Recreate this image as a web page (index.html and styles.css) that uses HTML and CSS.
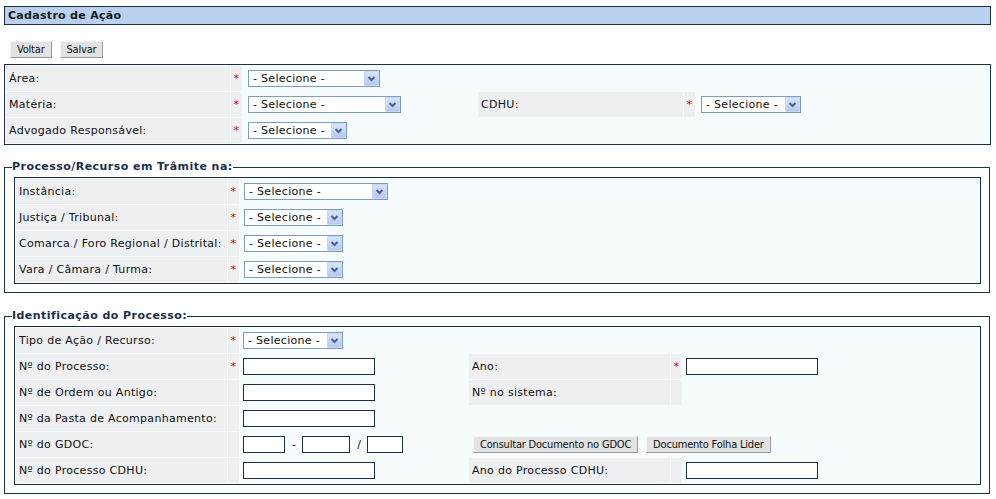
FILE: index.html
```html
<!DOCTYPE html>
<html>
<head lang="pt-BR">
    <meta charset="UTF-8">
    <title>Cadastro de Ação</title>
    <link rel="stylesheet" href="styles.css">
</head>
<body>
<div id="title-bar">Cadastro de Ação</div>

<div id="actions">
    <button class="btn" type="button">Voltar</button>
    <button class="btn" type="button">Salvar</button>
</div>

<table class="form-table main-table">
    <colgroup>
        <col class="c-lbl">
        <col class="c-req">
        <col class="c-fld">
        <col class="c-lbl2">
        <col class="c-req">
        <col>
    </colgroup>
    <tr>
        <td class="lbl">Área:</td>
        <td class="lbl req">*</td>
        <td class="fld">
            <span class="combo w-132"><select><option>- Selecione -</option></select><span class="arrow"><svg width="13" height="13" viewBox="0 0 13 13"><polyline points="3.5,5 6.5,8 9.5,5" fill="none" stroke="#4d6185" stroke-width="2"/></svg></span></span>
        </td>
        <td></td>
        <td></td>
        <td></td>
    </tr>
    <tr>
        <td class="lbl">Matéria:</td>
        <td class="lbl req">*</td>
        <td class="fld">
            <span class="combo w-153"><select><option>- Selecione -</option></select><span class="arrow"><svg width="13" height="13" viewBox="0 0 13 13"><polyline points="3.5,5 6.5,8 9.5,5" fill="none" stroke="#4d6185" stroke-width="2"/></svg></span></span>
        </td>
        <td class="lbl">CDHU:</td>
        <td class="lbl req">*</td>
        <td class="fld">
            <span class="combo w-100"><select><option>- Selecione -</option></select><span class="arrow"><svg width="13" height="13" viewBox="0 0 13 13"><polyline points="3.5,5 6.5,8 9.5,5" fill="none" stroke="#4d6185" stroke-width="2"/></svg></span></span>
        </td>
    </tr>
    <tr>
        <td class="lbl">Advogado Responsável:</td>
        <td class="lbl req">*</td>
        <td class="fld">
            <span class="combo w-99"><select><option>- Selecione -</option></select><span class="arrow"><svg width="13" height="13" viewBox="0 0 13 13"><polyline points="3.5,5 6.5,8 9.5,5" fill="none" stroke="#4d6185" stroke-width="2"/></svg></span></span>
        </td>
        <td></td>
        <td></td>
        <td></td>
    </tr>
</table>

<fieldset class="group first">
    <legend>Processo/Recurso em Trâmite na:</legend>
    <table class="form-table inner-table">
        <colgroup>
            <col class="c-lbl">
            <col class="c-req">
            <col class="c-fld">
            <col class="c-lbl2">
            <col class="c-req">
            <col>
        </colgroup>
        <tr>
            <td class="lbl">Instância:</td>
            <td class="lbl req">*</td>
            <td class="fld">
                <span class="combo w-144"><select><option>- Selecione -</option></select><span class="arrow"><svg width="13" height="13" viewBox="0 0 13 13"><polyline points="3.5,5 6.5,8 9.5,5" fill="none" stroke="#4d6185" stroke-width="2"/></svg></span></span>
            </td>
            <td></td>
            <td></td>
            <td></td>
        </tr>
        <tr>
            <td class="lbl">Justiça / Tribunal:</td>
            <td class="lbl req">*</td>
            <td class="fld">
                <span class="combo w-99"><select><option>- Selecione -</option></select><span class="arrow"><svg width="13" height="13" viewBox="0 0 13 13"><polyline points="3.5,5 6.5,8 9.5,5" fill="none" stroke="#4d6185" stroke-width="2"/></svg></span></span>
            </td>
            <td></td>
            <td></td>
            <td></td>
        </tr>
        <tr>
            <td class="lbl">Comarca / Foro Regional / Distrital:</td>
            <td class="lbl req">*</td>
            <td class="fld">
                <span class="combo w-99"><select><option>- Selecione -</option></select><span class="arrow"><svg width="13" height="13" viewBox="0 0 13 13"><polyline points="3.5,5 6.5,8 9.5,5" fill="none" stroke="#4d6185" stroke-width="2"/></svg></span></span>
            </td>
            <td></td>
            <td></td>
            <td></td>
        </tr>
        <tr>
            <td class="lbl">Vara / Câmara / Turma:</td>
            <td class="lbl req">*</td>
            <td class="fld">
                <span class="combo w-99"><select><option>- Selecione -</option></select><span class="arrow"><svg width="13" height="13" viewBox="0 0 13 13"><polyline points="3.5,5 6.5,8 9.5,5" fill="none" stroke="#4d6185" stroke-width="2"/></svg></span></span>
            </td>
            <td></td>
            <td></td>
            <td></td>
        </tr>
    </table>
</fieldset>

<fieldset class="group second">
    <legend>Identificação do Processo:</legend>
    <table class="form-table inner-table">
        <colgroup>
            <col class="c-lbl">
            <col class="c-req">
            <col class="c-fld">
            <col class="c-lbl2">
            <col class="c-req">
            <col>
        </colgroup>
        <tr>
            <td class="lbl">Tipo de Ação / Recurso:</td>
            <td class="lbl req">*</td>
            <td class="fld">
                <span class="combo w-100 tight"><select><option>- Selecione -</option></select><span class="arrow"><svg width="13" height="13" viewBox="0 0 13 13"><polyline points="3.5,5 6.5,8 9.5,5" fill="none" stroke="#4d6185" stroke-width="2"/></svg></span></span>
            </td>
            <td></td>
            <td></td>
            <td></td>
        </tr>
        <tr>
            <td class="lbl">Nº do Processo:</td>
            <td class="lbl req">*</td>
            <td class="fld"><input class="txt" type="text"></td>
            <td class="lbl">Ano:</td>
            <td class="lbl req">*</td>
            <td class="fld"><input class="txt" type="text"></td>
        </tr>
        <tr>
            <td class="lbl">Nº de Ordem ou Antigo:</td>
            <td class="lbl req"></td>
            <td class="fld"><input class="txt" type="text"></td>
            <td class="lbl">Nº no sistema:</td>
            <td class="lbl req"></td>
            <td></td>
        </tr>
        <tr>
            <td class="lbl">Nº da Pasta de Acompanhamento:</td>
            <td class="lbl req"></td>
            <td class="fld"><input class="txt" type="text"></td>
            <td></td>
            <td></td>
            <td></td>
        </tr>
        <tr>
            <td class="lbl">Nº do GDOC:</td>
            <td class="lbl req"></td>
            <td class="fld">
                <div class="gdoc">
                    <input class="txt w-42" type="text">
                    <span>-</span>
                    <input class="txt w-48" type="text">
                    <span>/</span>
                    <input class="txt w-36" type="text">
                </div>
            </td>
            <td class="fld" colspan="3">
                <div class="doc-buttons">
                    <button class="btn" type="button">Consultar Documento no GDOC</button>
                    <button class="btn" type="button">Documento Folha Lider</button>
                </div>
            </td>
        </tr>
        <tr>
            <td class="lbl">Nº do Processo CDHU:</td>
            <td class="lbl req"></td>
            <td class="fld"><input class="txt" type="text"></td>
            <td class="lbl">Ano do Processo CDHU:</td>
            <td class="lbl req"></td>
            <td class="fld"><input class="txt" type="text"></td>
        </tr>
    </table>
</fieldset>
</body>
</html>
```

FILE: styles.css
```css
* {
    box-sizing: border-box;
}

body {
    margin: 0;
    padding: 6px 5px 0 4px;
    background: #ffffff;
    font-family: "DejaVu Sans", Verdana, sans-serif;
    font-size: 11px;
    letter-spacing: 0.3px;
    color: #111111;
}

#title-bar {
    height: 19px;
    line-height: 17px;
    padding: 0 3px;
    border: 1px solid #1c2f47;
    background: #b9d1ee;
    font-weight: bold;
    color: #101820;
}

#actions {
    display: flex;
    gap: 8px;
    padding: 16px 0 6px 6px;
}

.btn {
    height: 17px;
    padding: 0 6px;
    margin: 0;
    border: 1px solid;
    border-color: #f4f4f4 #9a9a9a #9a9a9a #f4f4f4;
    background: #e2e2e2;
    font-family: "DejaVu Sans Condensed", "Liberation Sans", sans-serif;
    font-size: 11px;
    letter-spacing: -0.2px;
    line-height: 15px;
    color: #111;
}

/* tabelas do formulario */
.form-table {
    width: 100%;
    table-layout: fixed;
    border-collapse: separate;
    border-spacing: 1px;
    border: 1px solid #1c2f47;
    background: #f6fcfd;
}

.form-table td {
    height: 25px;
    padding: 0 2px 0 3px;
    vertical-align: middle;
    white-space: nowrap;
}

.main-table .c-lbl { width: 224px; }
.main-table .c-fld { width: 234px; }
.main-table .c-lbl2 { width: 205px; }
.inner-table .c-lbl { width: 211px; }
.inner-table .c-fld { width: 228px; }
.inner-table .c-lbl2 { width: 201px; }
.c-req { width: 11px; }

.form-table td.lbl {
    background: #eeeff1;
}

.form-table td.req {
    padding: 0;
    text-align: center;
    color: #e00000;
}

.main-table td.fld {
    padding-left: 4px;
}

/* combo */
.combo {
    display: inline-flex;
    align-items: center;
    height: 17px;
    border: 1px solid #7f9db9;
    background: #ffffff;
    vertical-align: middle;
    margin-left: 1px;
}

.combo.tight {
    margin-left: 0;
}

.combo select {
    flex: 1;
    min-width: 0;
    height: 15px;
    padding: 0 0 0 4px;
    margin: 0;
    border: 0;
    background: transparent;
    -webkit-appearance: none;
    appearance: none;
    font-family: "DejaVu Sans", Verdana, sans-serif;
    font-size: 11px;
    letter-spacing: 0.3px;
    color: #111;
    outline: none;
}

.combo .arrow {
    display: flex;
    align-items: center;
    justify-content: center;
    width: 15px;
    height: 15px;
    border: 1px solid #c8d7f7;
    border-radius: 1px;
    background: linear-gradient(#d7e3fc, #b4c9f5);
}

.w-99 { width: 99px; }
.w-100 { width: 100px; }
.w-132 { width: 132px; }
.w-144 { width: 144px; }
.w-153 { width: 153px; }

/* campos texto */
.txt {
    width: 132px;
    height: 17px;
    padding: 0 2px;
    margin: 0;
    border: 1px solid #1b2f48;
    background: #ffffff;
    vertical-align: middle;
    font-family: "DejaVu Sans", Verdana, sans-serif;
    font-size: 11px;
}

.txt.w-42 { width: 42px; }
.txt.w-48 { width: 48px; }
.txt.w-36 { width: 36px; }

.gdoc {
    display: flex;
    align-items: center;
    gap: 7px;
}

.gdoc span {
    margin-right: -1px;
}

.doc-buttons {
    display: flex;
    gap: 8px;
    padding-left: 1px;
}

/* grupos */
.group {
    margin: 15px 1px 0 0;
    padding: 3px 8px 8px 9px;
    border: 1px solid #173a3e;
    min-width: 0;
}

.group.second {
    margin-top: 16px;
}

.group legend {
    padding: 0;
    margin-left: -2px;
    font-weight: bold;
    letter-spacing: 0.45px;
    line-height: 14px;
    color: #1b2e4b;
}
```
